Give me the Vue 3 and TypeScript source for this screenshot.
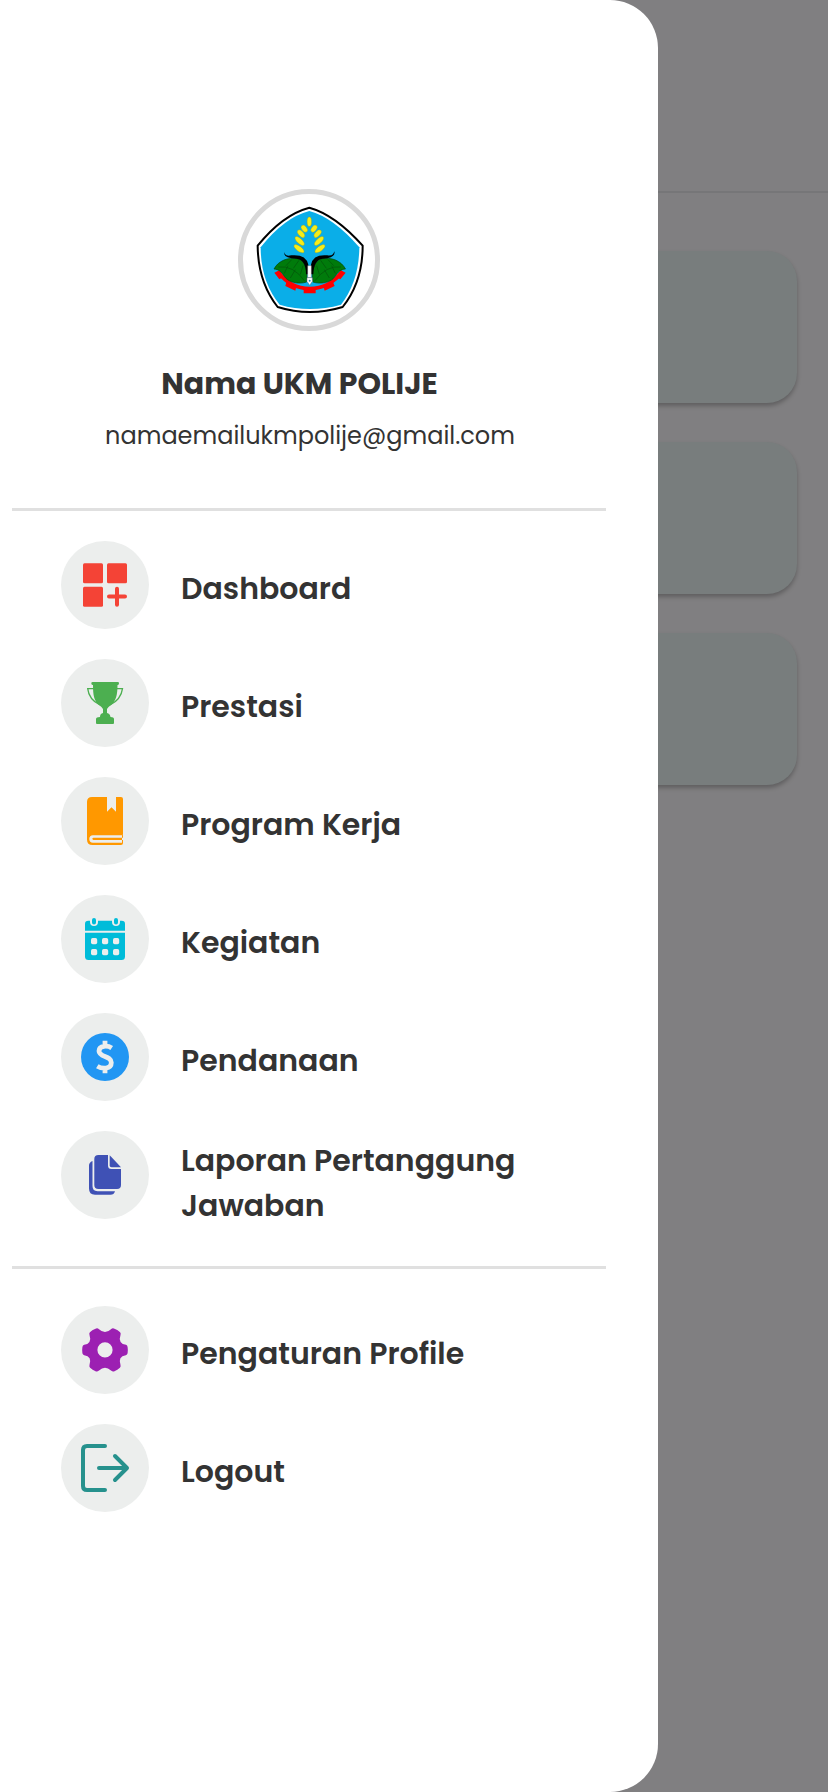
<script setup lang="ts">
interface Item {
  icon: string
  color: string
  label: string
  tall?: boolean
}

const mainItems: Item[] = [
  { icon: 'dashboard', color: '#f44336', label: 'Dashboard' },
  { icon: 'trophy', color: '#4caf50', label: 'Prestasi' },
  { icon: 'book', color: '#ff9800', label: 'Program Kerja' },
  { icon: 'calendar', color: '#00bcd9', label: 'Kegiatan' },
  { icon: 'dollar', color: '#2196f3', label: 'Pendanaan' },
  { icon: 'files', color: '#3f51b5', label: 'Laporan Pertanggung Jawaban', tall: true },
]
const accountItems: Item[] = [
  { icon: 'gear', color: '#9c20b2', label: 'Pengaturan Profile' },
  { icon: 'logout', color: '#26918d', label: 'Logout' },
]
const sections = [mainItems, accountItems]

const leaf =
  'M132 267C145 242 174 231 204 236C228 243 234 274 230 306C206 314 174 307 163 289C154 275 146 268 132 267Z'
const grains = [
  [223, 146, -38],
  [213, 161, -42],
  [209, 183, -47],
  [207, 206, -54],
  [252, 146, 38],
  [263, 161, 42],
  [267, 183, 47],
  [270, 206, 54],
]
</script>

<template>
  <div class="screen">
    <div class="page">
      <div class="topbar"></div>
      <div class="cards">
        <div v-for="n in 3" :key="n" class="card"></div>
      </div>
    </div>

    <aside class="drawer">
      <header class="profile">
        <svg class="avatar" viewBox="24 27 426 426">
          <circle cx="237" cy="240" r="205.5" fill="#fff" stroke="#d9d9d9" stroke-width="15" />
          <path
            d="M238 83Q315 104 398 197Q398 306 338 381Q239 411 143 381Q84 306 83 197Q158 104 238 83Z"
            fill="#fff"
            stroke="#000"
            stroke-width="6"
            stroke-linejoin="round"
          />
          <path
            d="M238 93Q310 112 388 202Q387 304 333 374Q239 400 149 374Q92 304 92 202Q163 112 238 93Z"
            fill="#0aaee8"
          />
          <path
            d="M143 275Q182 326 239 326Q297 326 338 275"
            fill="none"
            stroke="#f00"
            stroke-width="11"
          />
          <path
            d="M133 278L148 271L162 290L148 298ZM170 304L200 316L196 332L166 318ZM221 322H257V340H221ZM279 316L308 304L314 318L284 332ZM316 290L332 271L347 278L331 298Z"
            fill="#f00"
          />
          <g fill="#007b0b" stroke="#034408" stroke-width="2">
            <path :d="leaf" />
            <path :d="leaf" transform="translate(478.5 0) scale(-1 1)" />
          </g>
          <path
            d="M145 261Q190 255 224 303M168 257L185 239M190 265L207 241M174 257L163 280M196 269L181 294M211 283L219 257M333 261Q289 255 254 303M311 257L294 239M289 265L272 241M305 257L316 280M283 269L298 294M268 283L260 257"
            fill="none"
            stroke="#03520a"
            stroke-width="2"
          />
          <path d="M163 217Q166 231 184 226Q228 222 235 254V283H228Q228 239 199 236Q160 235 163 217Z" />
          <path d="M313 214Q310 229 292 226Q249 222 243 254V283H250Q251 239 278 236Q318 234 313 214Z" />
          <path d="M233 257H244V293H233Z" fill="#fff" stroke="#555" stroke-width="1" />
          <path d="M231 293H247V304L239 316L231 304Z" fill="#fff" stroke="#667" stroke-width="1.5" />
          <circle cx="239" cy="302" r="3" fill="#168bc8" />
          <g fill="#f6ed19" stroke="#a99d0a" stroke-width="1">
            <ellipse cx="238" cy="125" rx="6.5" ry="14" />
            <ellipse
              v-for="(g, i) in grains"
              :key="i"
              :cx="g[0]"
              :cy="g[1]"
              rx="7.5"
              :ry="i % 4 === 0 ? 12 : i % 4 === 1 ? 14 : 18"
              :transform="`rotate(${g[2]} ${g[0]} ${g[1]})`"
            />
          </g>
        </svg>
        <h1 class="name">Nama UKM POLIJE</h1>
        <p class="email">namaemailukmpolije@gmail.com</p>
      </header>

      <nav v-for="(items, s) in sections" :key="s" class="menu">
        <a v-for="item in items" :key="item.icon" class="item">
          <svg class="icon" viewBox="0 0 88 88" :fill="item.color" :stroke="item.color" stroke-width="0">
            <circle cx="44" cy="44" r="44" fill="#eceeed" />
            <template v-if="item.icon === 'dashboard'">
              <rect x="22" y="22.3" width="20" height="20" rx="1.5" />
              <rect x="46" y="22.3" width="20" height="20" rx="1.5" />
              <rect x="22" y="45.7" width="20" height="20" rx="1.5" />
              <path d="M48 55.5H64M56 47.7V63.7" stroke-width="4" stroke-linecap="round" />
            </template>
            <template v-else-if="item.icon === 'trophy'">
              <path
                d="M31.5 23H57Q58.3 23 58 24.5Q57.8 26 56.5 26C56.5 36 55 42 50 46Q46.5 48.5 46 50V54Q49 54.5 49.5 58Q53 58 53 60V64Q53 65 52 65H36Q35 65 35 64V60Q35 58 39 58Q39 54.5 42 54V50Q41.5 48.5 38 46C33 42 32 36 32 26Q30.5 26 30.3 24.5Q30 23 31.5 23Z"
              />
              <path
                d="M33 29.6H26.7C27.5 37 33 43 39 46M55 29.6H61.5C60.5 37 55 43 49 46"
                fill="none"
                stroke-width="1.3"
              />
            </template>
            <path
              v-else-if="item.icon === 'book'"
              fill-rule="evenodd"
              d="M31 20H46V34.7L50.5 30.3L55 34.7V20H60Q62 20 62 22V57Q62 58.3 61 58.3H32Q28.3 58.5 28.3 62Q28.3 65.5 32 65.7H61V58H62V66Q62 68 60 68H31.5Q26 68 26 62.5V25Q26 20 31 20ZM32.5 60.7H62V63H32.5A1.15 1.15 0 0 1 32.5 60.7Z"
            />
            <template v-else-if="item.icon === 'calendar'">
              <path d="M24 35.7V29Q24 25.7 27.3 25.7H60.7Q64 25.7 64 29V35.7Z" />
              <path d="M24 37.7H64V61.5Q64 65 60.5 65H27.5Q24 65 24 61.5Z" />
              <path
                d="M33 22V27M55 22V27"
                stroke="#eceeed"
                stroke-width="8"
                stroke-linecap="round"
              />
              <path d="M33 25V27.5M55 25V27.5" stroke-width="4" stroke-linecap="round" />
              <g fill="#eceeed">
                <template v-for="x in [30, 41, 52]" :key="x">
                  <rect :x="x" y="43" width="6.2" height="6.2" rx="1.7" />
                  <rect :x="x" y="54" width="6.2" height="6.2" rx="1.7" />
                </template>
              </g>
            </template>
            <template v-else-if="item.icon === 'dollar'">
              <circle cx="44" cy="44" r="24" />
              <path
                d="M44 27.7V34M44 54V60.3M50.7 35C47 32.5 38 32 38 38C38 44.5 50.3 42.5 50.3 49.5C50.3 56.5 41 56 36.3 53.2"
                fill="none"
                stroke="#eceeed"
                stroke-width="4.8"
              />
            </template>
            <template v-else-if="item.icon === 'files'">
              <path
                d="M37.5 24H47V34.5Q47 38 50.5 38H60V54Q60 58 56 58H37.5Q33.3 58 33.3 54V28Q33.3 24 37.5 24Z"
              />
              <path d="M48.7 24.3L60 36.3H50.5Q48.7 36.3 48.7 34.5Z" />
              <path
                d="M31.5 30V55Q31.5 60.2 36.5 60.2H54Q53 63.7 49.5 63.7H34Q28 63.7 28 57.5V34.5Q28 31.5 31.5 30Z"
              />
            </template>
            <path
              v-else-if="item.icon === 'gear'"
              fill-rule="evenodd"
              d="M34.5 22.7Q36.5 21.8 38 23.2Q41 26 44 26Q47 26 50 23.2Q51.5 21.8 53.5 22.7Q57 24 59.1 26.3Q60.1 27.3 59.5 29Q58 33 59.6 36Q61.2 38.6 65 38.8Q66.3 39 66.6 41Q67.1 44 66.6 47.3Q66.2 49 64.8 49.2Q60.8 49.6 59.4 52.2Q58 55.2 59.5 59Q60 60.7 58.9 61.7Q56.5 63.9 53.5 65.2Q51.5 65.8 50 64.4Q47 61.7 44 61.7Q41 61.7 38 64.4Q36.5 65.8 34.5 65.2Q31.5 63.9 29.1 61.7Q28 60.7 28.5 59Q30 55.2 28.6 52.2Q27.2 49.6 23.2 49.2Q21.8 49 21.4 47.3Q20.9 44 21.4 41Q21.7 39 23.2 38.8Q26.8 38.6 28.4 36Q30 33 28.5 29Q27.9 27.3 28.9 26.3Q31 24 34.5 22.7ZM44 36.3A7.6 7.6 0 1 0 44 51.5A7.6 7.6 0 1 0 44 36.3Z"
            />
            <path
              v-else
              d="M44 22H26Q22 22 22 26V62Q22 66 26 66H44M38 44H65M54 32L66 44L54 56"
              fill="none"
              stroke-width="4"
              stroke-linecap="round"
              stroke-linejoin="round"
            />
          </svg>
          <span class="label" :class="{ tall: item.tall }">{{ item.label }}</span>
        </a>
      </nav>
    </aside>
  </div>
</template>

<style>
body {
  margin: 0;
  background: #807f81;
}
</style>

<style scoped>
.screen {
  position: relative;
  width: 828px;
  height: 1792px;
  overflow: hidden;
  background: #807f81;
  color: #333;
  font-family: Poppins, Inter, 'Open Sans', sans-serif;
}
.topbar {
  box-sizing: border-box;
  height: 193px;
  border-bottom: 2px solid #767678;
}
.cards {
  display: flex;
  flex-direction: column;
  gap: 39px;
  padding: 58px 31px 0;
}
.card {
  height: 152px;
  border-radius: 30px;
  background: #787d7d;
  box-shadow: 0 3px 4px rgba(0, 0, 0, 0.25);
}
.drawer {
  position: absolute;
  inset: 0 auto 0 0;
  box-sizing: border-box;
  width: 658px;
  padding: 189px 52px 0 12px;
  border-radius: 0 48px 48px 0;
  background: #fff;
}
svg {
  display: block;
  flex: none;
}
.profile {
  display: flex;
  flex-direction: column;
  align-items: center;
  height: 319px;
}
.avatar {
  width: 142px;
  height: 142px;
}
.name {
  margin: 30px 19px 0 0;
  font-size: 30px;
  line-height: 45px;
  font-weight: 700;
}
.email {
  margin: 12px 0 0 2px;
  font-size: 24px;
  line-height: 36px;
}
.menu {
  display: flex;
  flex-direction: column;
  gap: 30px;
  height: 725px;
  padding: 30px 0 0 49px;
  border-top: 3px solid #e0e0e0;
}
.menu + .menu {
  height: auto;
  padding-top: 37px;
}
.item {
  display: flex;
  gap: 32px;
  height: 88px;
}
.icon {
  width: 88px;
  height: 88px;
}
.label {
  width: 360px;
  padding-top: 25px;
  font-size: 30px;
  line-height: 45px;
  font-weight: 600;
}
.label.tall {
  padding-top: 7px;
}
</style>
